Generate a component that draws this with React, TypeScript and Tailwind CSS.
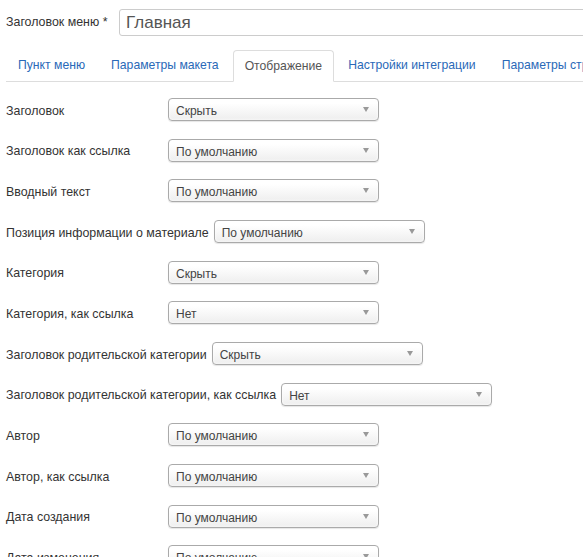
import React from "react";

const tabs = [
  { label: "Пункт меню" },
  { label: "Параметры макета" },
  { label: "Отображение", active: true },
  { label: "Настройки интеграции" },
  { label: "Параметры страницы" },
];

const rows = [
  { label: "Заголовок", value: "Скрыть" },
  { label: "Заголовок как ссылка", value: "По умолчанию" },
  { label: "Вводный текст", value: "По умолчанию" },
  { label: "Позиция информации о материале", value: "По умолчанию" },
  { label: "Категория", value: "Скрыть" },
  { label: "Категория, как ссылка", value: "Нет" },
  { label: "Заголовок родительской категории", value: "Скрыть" },
  { label: "Заголовок родительской категории, как ссылка", value: "Нет" },
  { label: "Автор", value: "По умолчанию" },
  { label: "Автор, как ссылка", value: "По умолчанию" },
  { label: "Дата создания", value: "По умолчанию" },
  { label: "Дата изменения", value: "По умолчанию" },
];

const Select = ({ value }: { value: string }) => (
  <div className="flex items-center justify-between w-[211px] h-[23px] shrink-0 pl-[7px] pr-[9px] border border-[#aaaaaa] rounded-[4px] bg-gradient-to-b from-white from-20% to-[#eeeeee] shadow-[0_0_3px_rgba(255,255,255,1)_inset,0_1px_1px_rgba(0,0,0,0.1)] text-[12px] text-[#444]">
    <span className="pt-[3px]">{value}</span>
    <span className="w-0 h-0 border-l-[3.5px] border-r-[3.5px] border-t-[5px] border-l-transparent border-r-transparent border-t-[#999]" />
  </div>
);

const App = () => {
  return (
    <div
      className="w-[583px] h-[557px] overflow-hidden bg-white text-[#333] whitespace-nowrap"
      style={{ fontFamily: '"Liberation Sans", Arial, sans-serif' }}
    >
      <div className="flex items-center pl-[6px] pt-[9px] h-[36px]">
        <span className="w-[113px] shrink-0 text-[12.4px]">Заголовок меню *</span>
        <div className="h-[27px] w-[500px] shrink-0 border border-[#cccccc] rounded-[3px] flex items-center px-[6px] text-[17px] text-[#555]">
          Главная
        </div>
      </div>

      <div className="flex items-end mt-[14px] ml-[6px] border-b border-[#dddddd] h-[32px]">
        {tabs.map((t) => (
          <div
            key={t.label}
            className={
              t.active
                ? "shrink-0 h-[32px] -mb-px mr-[2px] px-[11px] flex items-center text-[12.2px] text-[#555] bg-white border border-[#dddddd] border-b-white rounded-t-[4px]"
                : "shrink-0 h-[32px] mr-[2px] px-[12px] flex items-center text-[12.2px] text-[#2a69b8]"
            }
          >
            {t.label}
          </div>
        ))}
      </div>

      <div className="flex flex-col pl-[6px] pt-[7px]">
        {rows.map((r) => (
          <div key={r.label} className="flex items-center h-[40.7px] shrink-0">
            <span className="min-w-[162px] pr-[5px] pt-[3px] text-[12.4px]">{r.label}</span>
            <Select value={r.value} />
          </div>
        ))}
      </div>
    </div>
  );
};

export default App;
